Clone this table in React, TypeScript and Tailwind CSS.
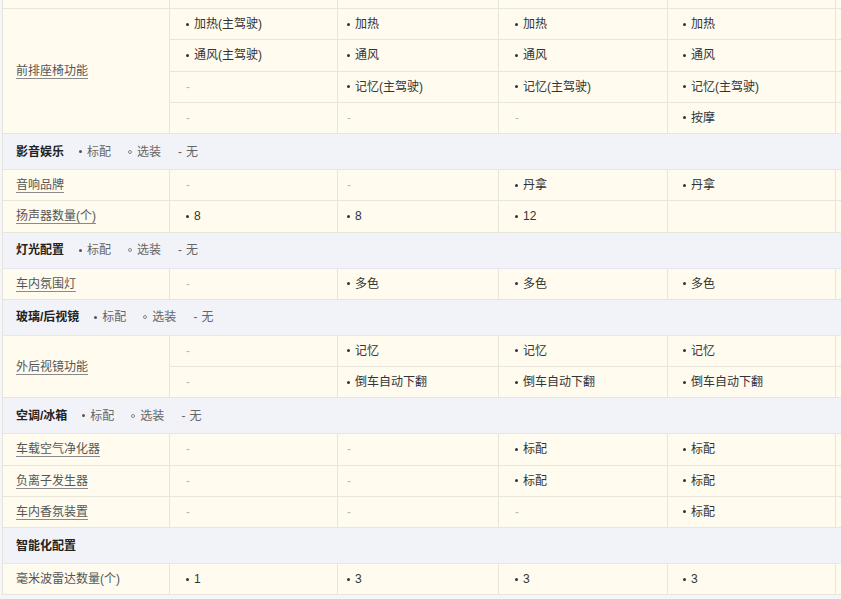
type Cell = string; // "-" = none, "" = blank, else bullet value

type Group = { kind: "group"; label: string; plain?: boolean; rows: Cell[][] };
type Section = { kind: "section"; title: string; legend: boolean };
type Block = Group | Section;

const blocks: Block[] = [
  {
    kind: "group",
    label: "前排座椅功能",
    rows: [
      ["加热(主驾驶)", "加热", "加热", "加热"],
      ["通风(主驾驶)", "通风", "通风", "通风"],
      ["-", "记忆(主驾驶)", "记忆(主驾驶)", "记忆(主驾驶)"],
      ["-", "-", "-", "按摩"],
    ],
  },
  { kind: "section", title: "影音娱乐", legend: true },
  { kind: "group", label: "音响品牌", rows: [["-", "-", "丹拿", "丹拿"]] },
  { kind: "group", label: "扬声器数量(个)", rows: [["8", "8", "12", ""]] },
  { kind: "section", title: "灯光配置", legend: true },
  { kind: "group", label: "车内氛围灯", rows: [["-", "多色", "多色", "多色"]] },
  { kind: "section", title: "玻璃/后视镜", legend: true },
  {
    kind: "group",
    label: "外后视镜功能",
    rows: [
      ["-", "记忆", "记忆", "记忆"],
      ["-", "倒车自动下翻", "倒车自动下翻", "倒车自动下翻"],
    ],
  },
  { kind: "section", title: "空调/冰箱", legend: true },
  { kind: "group", label: "车载空气净化器", rows: [["-", "-", "标配", "标配"]] },
  { kind: "group", label: "负离子发生器", rows: [["-", "-", "标配", "标配"]] },
  { kind: "group", label: "车内香氛装置", rows: [["-", "-", "-", "标配"]] },
  { kind: "section", title: "智能化配置", legend: false },
  { kind: "group", label: "毫米波雷达数量(个)", plain: true, rows: [["1", "3", "3", "3"]] },
];

// column widths include the right border
const colW = ["w-[168px]", "w-[161px]", "w-[169px]", "w-[168px]"];
const colPad = ["pl-[16px]", "pl-[9px]", "pl-[16px]", "pl-[15px]"];

function Value({ v }: { v: Cell }) {
  if (v === "") return null;
  if (v === "-") return <span className="text-[#b8b8b8]">-</span>;
  return (
    <span className="flex items-center text-[#333]">
      <span className="w-[3px] h-[3px] rounded-full bg-[#333] mr-[5px]" />
      {v}
    </span>
  );
}

function Legend() {
  return (
    <div className="flex items-center gap-[17px] text-[#666] ml-[15px]">
      <span className="flex items-center">
        <span className="w-[3px] h-[3px] rounded-full bg-[#555] mr-[5px]" />
        标配
      </span>
      <span className="flex items-center">
        <span className="w-[4px] h-[4px] rounded-full border border-[#888] mr-[5px]" />
        选装
      </span>
      <span className="flex items-center">
        <span className="mr-[4px]">-</span>无
      </span>
    </div>
  );
}

export default function App() {
  return (
    <div
      className="w-[841px] h-[599px] overflow-hidden bg-[#f5f6fa] pl-[2px] text-[12px] leading-none"
      style={{ fontFamily: '"Liberation Sans", "Noto Sans CJK SC", sans-serif' }}
    >
      <div className="w-[1000px] border-l border-[#e5e3da]">
        {/* cut-off row at the top */}
        <div className="flex h-[9px] bg-[#fffbef] border-b border-[#e8e5da]">
          <div className="w-[167px] shrink-0 border-r border-[#e8e5da]" />
          {colW.map((w, i) => (
            <div key={i} className={`${w} shrink-0 border-r border-[#e8e5da]`} />
          ))}
        </div>

        {blocks.map((b, bi) =>
          b.kind === "section" ? (
            <div
              key={bi}
              className="flex items-center h-[36px] pl-[13px] bg-[#f2f3f8] border-b border-[#e6e7ee]"
            >
              <span className="font-bold text-[#222]">{b.title}</span>
              {b.legend && <Legend />}
            </div>
          ) : (
            <div key={bi} className="flex bg-[#fffbef] border-b border-[#e8e5da]">
              <div className="w-[167px] shrink-0 flex items-center pl-[13px] border-r border-[#e8e5da]">
                <span
                  className={
                    b.plain
                      ? "text-[#555]"
                      : "text-[#555] underline decoration-[#8a8a8a] underline-offset-[3px]"
                  }
                >
                  {b.label}
                </span>
              </div>
              <div className="flex flex-col">
                {b.rows.map((r, ri) => (
                  <div
                    key={ri}
                    className={`flex ${
                      ri < b.rows.length - 1
                        ? "h-[31.25px] border-b border-[#e8e5da]"
                        : "h-[30.25px]"
                    }`}
                  >
                    {r.map((v, ci) => (
                      <div
                        key={ci}
                        className={`${colW[ci]} ${colPad[ci]} shrink-0 flex items-center border-r border-[#e8e5da]`}
                      >
                        <Value v={v} />
                      </div>
                    ))}
                    <div className="w-[120px] shrink-0 border-r border-[#e8e5da]" />
                  </div>
                ))}
              </div>
            </div>
          )
        )}
      </div>
    </div>
  );
}
